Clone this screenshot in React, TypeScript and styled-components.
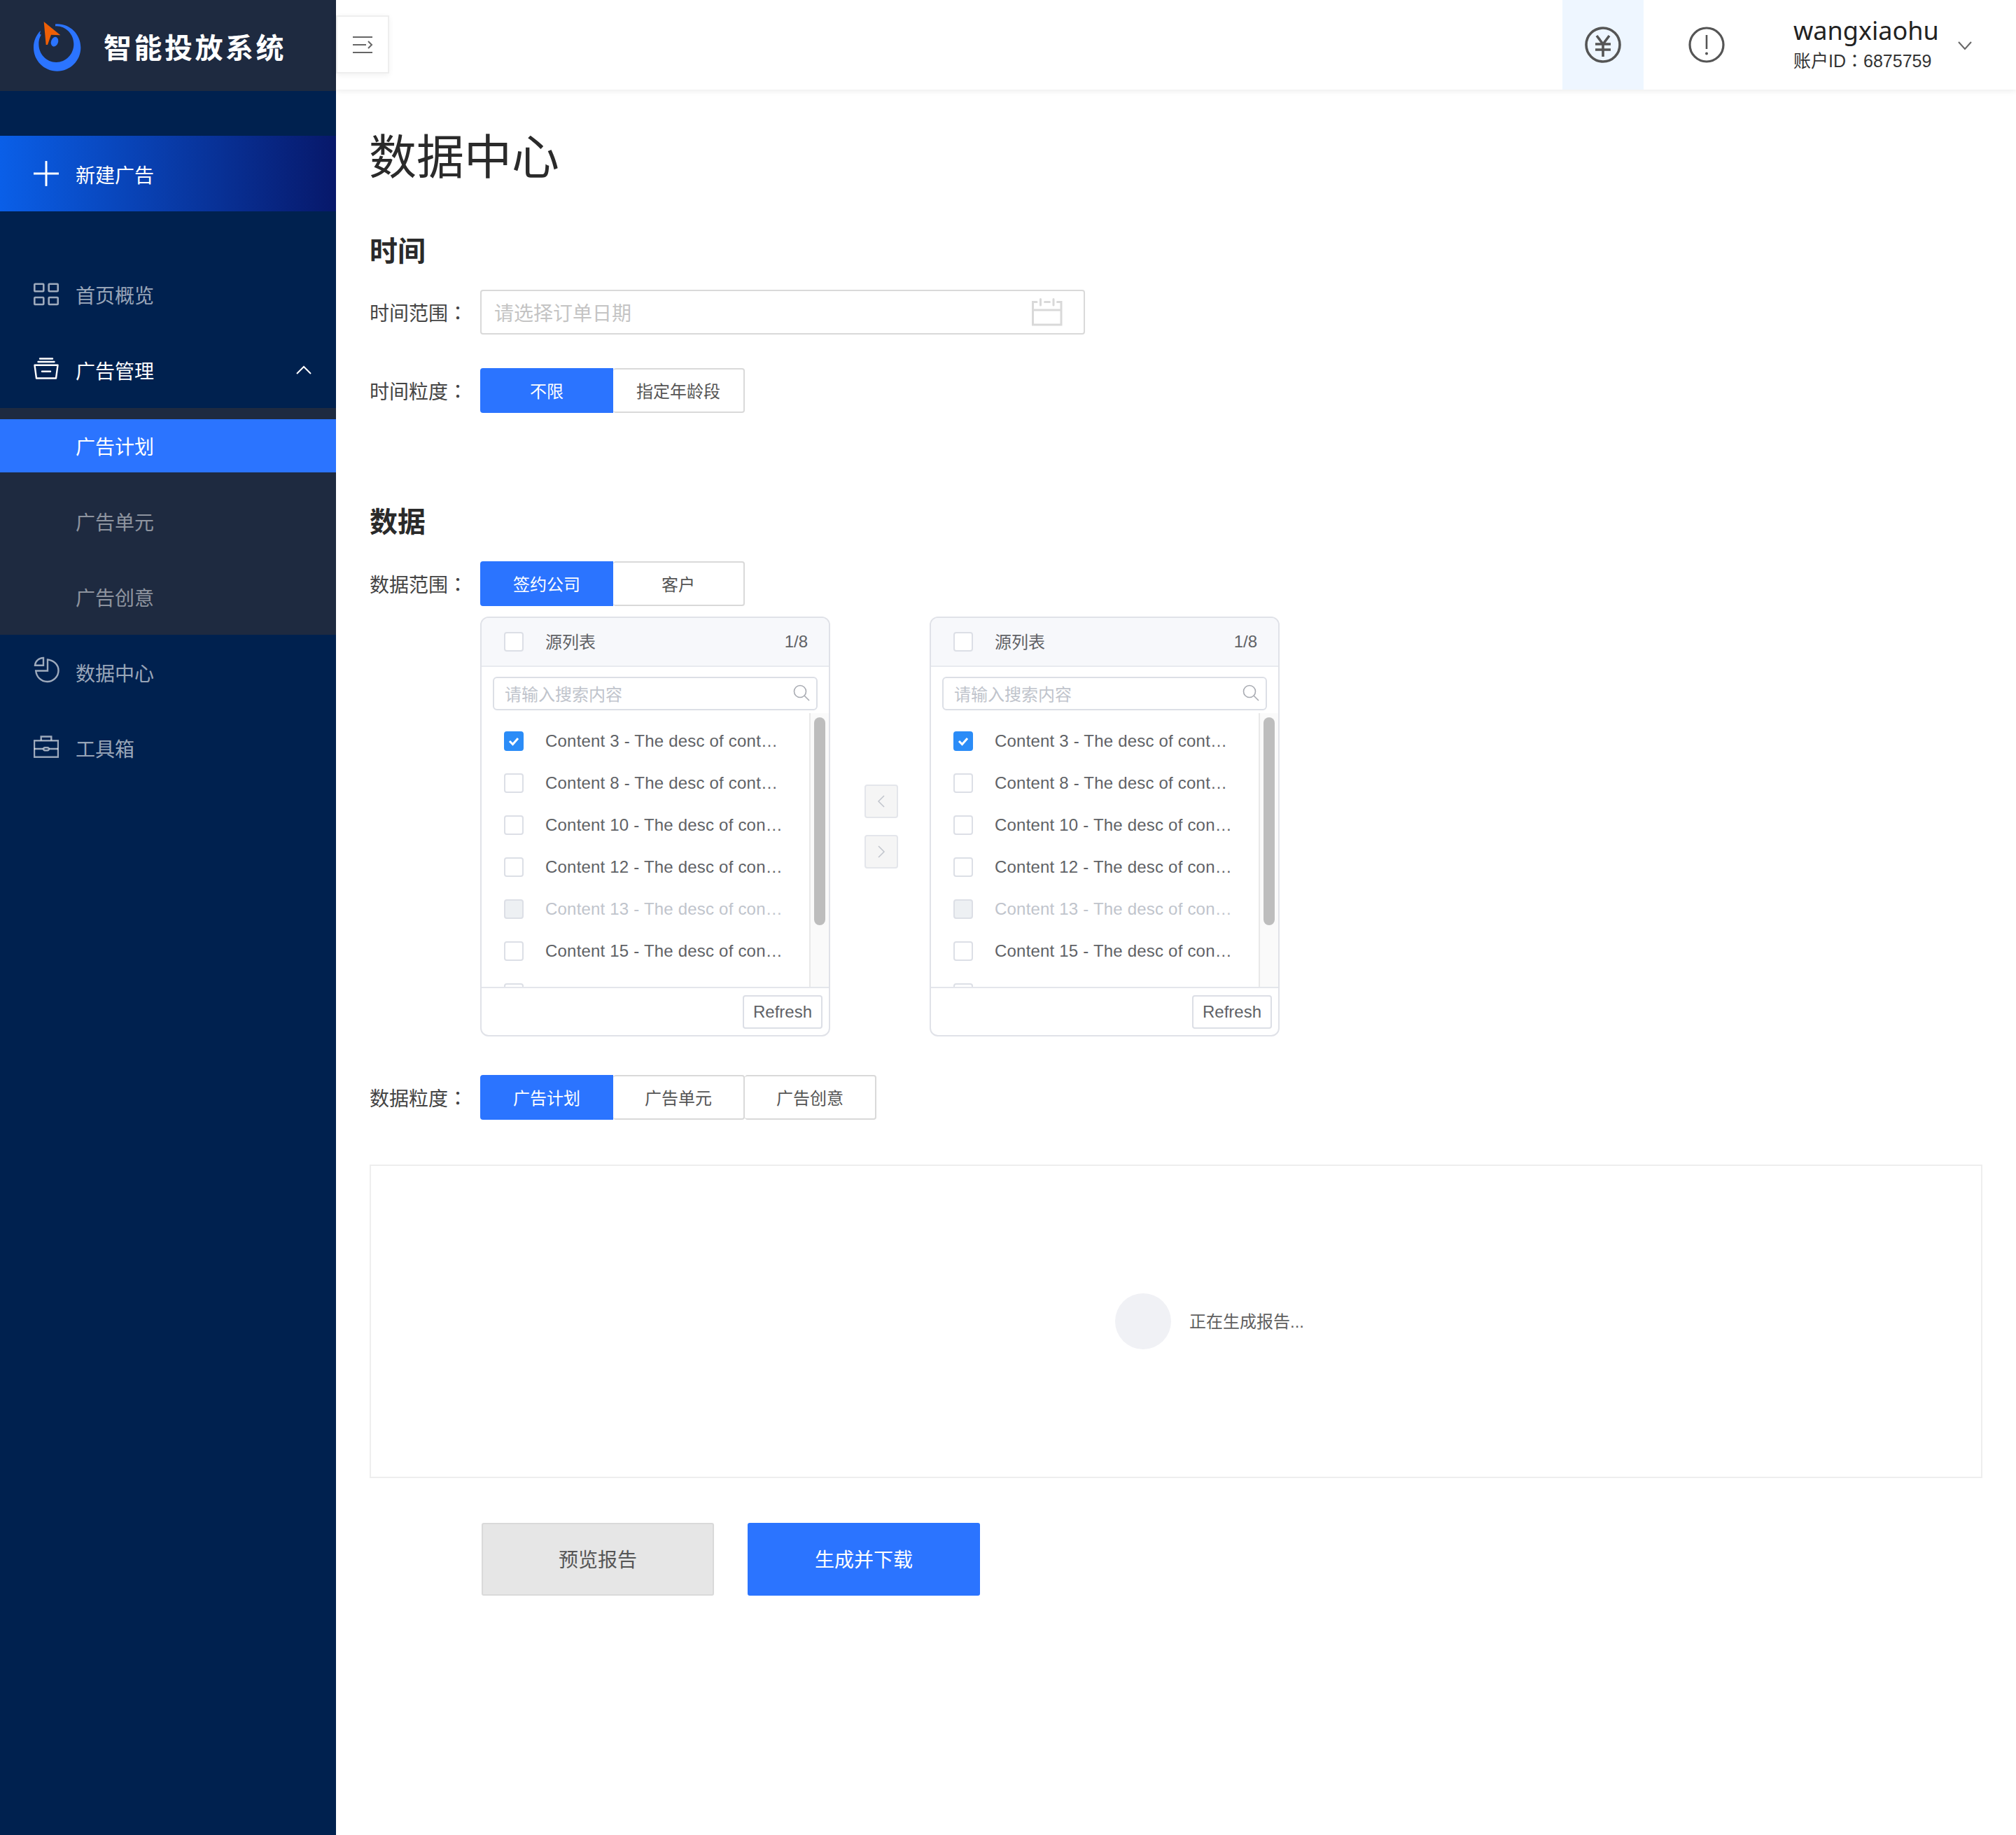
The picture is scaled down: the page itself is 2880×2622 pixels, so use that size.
import styled, { createGlobalStyle } from "styled-components";

const sans = `"Liberation Sans", "Noto Sans CJK SC", sans-serif`;

const GlobalStyle = createGlobalStyle`
  html, body {
    margin: 0;
    padding: 0;
    background: #fff;
  }
  * {
    box-sizing: border-box;
  }
  body {
    font-family: ${sans};
  }
`;

const rows = [
  { text: "Content 3 - The desc of content 3", checked: true },
  { text: "Content 8 - The desc of content 8" },
  { text: "Content 10 - The desc of content 10" },
  { text: "Content 12 - The desc of content 12" },
  { text: "Content 13 - The desc of content 13", disabled: true },
  { text: "Content 15 - The desc of content 15" },
  { text: "Content 16 - The desc of content 16" },
];

const Logo = () => (
  <svg width="70" height="72" viewBox="50 33 210 216">
    <path
      fill="#2b74ff"
      fillRule="evenodd"
      d="M154 46C210 46 255 90 255 147C255 203 210 248 154 248C98 248 53 203 53 147C53 90 98 46 154 46ZM150 55C108 55 75 90 75 132C75 175 108 210 150 210C192 210 225 175 225 132C225 90 192 55 150 55Z"
    />
    <path fill="#1e2a40" d="M88 40H146V56C122 60 108 74 100 96L80 90Z" />
    <ellipse cx="143" cy="122" rx="15" ry="21" fill="#2b74ff" transform="rotate(20 143 122)" />
    <path fill="#ee5f06" d="M97 36L168 94L128 92L113 135L106 135Z" />
  </svg>
);

const Plus = () => (
  <svg width="36" height="36" viewBox="0 0 36 36" stroke="#fff" strokeWidth="3" strokeLinecap="round">
    <path d="M0 18H36M18 1V35" />
  </svg>
);

const GridIcon = () => (
  <svg width="36" height="36" viewBox="0 0 36 36" fill="none" stroke="currentColor" strokeWidth="2.600">
    <rect x="1.300" y="2.800" width="13" height="10.500" rx="1" />
    <rect x="21.700" y="2.800" width="13" height="10.500" rx="1" />
    <rect x="1.300" y="22" width="13" height="10" rx="1" />
    <rect x="21.700" y="22" width="13" height="10" rx="1" />
  </svg>
);

const TrayIcon = () => (
  <svg width="36" height="36" viewBox="0 0 36 36" fill="none" stroke="currentColor" strokeWidth="2.400" strokeLinecap="round">
    <path d="M9 1.500H27M6.500 6H29.500" />
    <path d="M1.500 10.800H34.500L32 29.500H4Z" strokeLinejoin="round" />
    <path d="M12 19.700H24" />
  </svg>
);

const PieIcon = () => (
  <svg width="36" height="36" viewBox="0 4 36 36" overflow="visible" fill="none" stroke="currentColor" strokeWidth="2.400">
    <path d="M14 11.700H2C2.500 5.500 7.500 1.200 14 1V11.700Z" />
    <path d="M20 3.500C28.500 4.500 35.500 10.500 35.500 19C35.500 28 28 35 19.500 35C10.500 35 4 28 3.200 19.500H20Z" />
  </svg>
);

const CaseIcon = () => (
  <svg width="36" height="36" viewBox="0 0 36 36" fill="none" stroke="currentColor" strokeWidth="2.400">
    <rect x="1" y="7.300" width="34" height="23.400" />
    <path d="M10.700 7V1.500H25.300V7M1 19H14M22 19H35" />
    <rect x="14.500" y="17.300" width="7" height="4" rx="1.500" />
  </svg>
);

const Chevron = ({ up, size, color }: { up?: boolean; size: number; color: string }) => (
  <svg width={size} height={size} viewBox="0 0 24 24" fill="none" stroke={color} strokeWidth="2">
    <path d={up ? "M2 17L12 7L22 17" : "M3 8L12 18L21 8"} />
  </svg>
);

const Collapse = () => (
  <svg width="30" height="26" viewBox="0 0 30 26" fill="none" stroke="#666" strokeWidth="2">
    <path d="M1 2H29M1 13H20M1 24H29" />
    <path d="M23 8L28 13L23 18" />
  </svg>
);

const YenIcon = () => (
  <svg width="52" height="52" viewBox="0 0 52 52" fill="none" stroke="#555" strokeWidth="3.600">
    <circle cx="26" cy="26" r="24" />
    <path d="M17 13L26 25L35 13M15 25H37M15 33H37M26 25V43" />
  </svg>
);

const AlertIcon = () => (
  <svg width="52" height="52" viewBox="0 0 52 52" fill="none" stroke="#555" strokeWidth="3.200">
    <circle cx="26" cy="26" r="24" />
    <path d="M26 12V32" strokeWidth="2.600" />
    <circle cx="26" cy="38.500" r="2" fill="#555" stroke="none" />
  </svg>
);

const CalendarIcon = () => (
  <svg width="44" height="40" viewBox="0 0 44 40" fill="none" stroke="#d9d9d9" strokeWidth="3" strokeLinecap="round">
    <path d="M7 5.500H1.500V38H42V5.500H36.500M1.500 17H42M12.500 1.500V10M31 1.500V10M18.500 5.500H25.500" />
  </svg>
);

const SearchIcon = () => (
  <svg width="24" height="24" viewBox="0 0 24 24" fill="none" stroke="#a8abb2" strokeWidth="1.600">
    <circle cx="10" cy="10" r="8.500" />
    <path d="M16 16L23 23" />
  </svg>
);

const Arrow = ({ right }: { right?: boolean }) => (
  <svg width="12" height="20" viewBox="0 0 12 20" fill="none" stroke="#c0c4cc" strokeWidth="1.500">
    <path d={right ? "M2 2L10 10L2 18" : "M10 2L2 10L10 18"} />
  </svg>
);

const Transfer = () => (
  <Panel>
    <PanelHead>
      <Check />
      <HeadTitle>源列表</HeadTitle>
      <Count>1/8</Count>
    </PanelHead>
    <SearchBox>
      <span>请输入搜索内容</span>
      <SearchIcon />
    </SearchBox>
    <ListArea>
      <RowList>
        {rows.map((r) => (
          <Row key={r.text} $disabled={r.disabled}>
            <Check $checked={r.checked} $disabled={r.disabled}>
              {r.checked && (
                <svg width="16" height="14" viewBox="0 0 16 14" fill="none" stroke="#fff" strokeWidth="3">
                  <path d="M2 7L6.500 11.500L14 3" />
                </svg>
              )}
            </Check>
            <RowText>{r.text}</RowText>
          </Row>
        ))}
      </RowList>
      <Track>
        <Thumb />
      </Track>
    </ListArea>
    <PanelFoot>
      <Refresh>Refresh</Refresh>
    </PanelFoot>
  </Panel>
);

export default function App() {
  return (
    <>
      <GlobalStyle />
      <Page>
        <Sidebar>
          <Brand>
            <Logo />
            <BrandName>智能投放系统</BrandName>
          </Brand>
          <NewAd>
            <Plus />
            <NewAdText>新建广告</NewAdText>
          </NewAd>
          <Nav>
            <NavItem>
              <GridIcon />
              首页概览
            </NavItem>
            <NavItem $open>
              <TrayIcon />
              广告管理
              <Caret>
                <Chevron up size={24} color="#fff" />
              </Caret>
            </NavItem>
            <SubMenu>
              <SubItem $active>广告计划</SubItem>
              <SubItem>广告单元</SubItem>
              <SubItem>广告创意</SubItem>
            </SubMenu>
            <NavItem>
              <PieIcon />
              数据中心
            </NavItem>
            <NavItem>
              <CaseIcon />
              工具箱
            </NavItem>
          </Nav>
        </Sidebar>
        <Main>
          <TopBar>
            <Toggle>
              <Collapse />
            </Toggle>
            <TopRight>
              <TopIcon $active>
                <YenIcon />
              </TopIcon>
              <TopIcon>
                <AlertIcon />
              </TopIcon>
              <User>
                <UserName>wangxiaohu</UserName>
                <UserId>
                  账户ID<Colon>：</Colon>6875759
                </UserId>
              </User>
              <Chevron size={24} color="#666" />
            </TopRight>
          </TopBar>
          <Content>
            <PageTitle>数据中心</PageTitle>
            <Heading>时间</Heading>
            <FormRow>
              <Label>
                时间范围<Colon>：</Colon>
              </Label>
              <DateInput>
                请选择订单日期
                <CalendarIcon />
              </DateInput>
            </FormRow>
            <FormRow $top={48}>
              <Label>
                时间粒度<Colon>：</Colon>
              </Label>
              <Segments>
                <Segment $active>不限</Segment>
                <Segment>指定年龄段</Segment>
              </Segments>
            </FormRow>
            <Heading $top={128}>数据</Heading>
            <FormRow $top={28}>
              <Label>
                数据范围<Colon>：</Colon>
              </Label>
              <Segments>
                <Segment $active>签约公司</Segment>
                <Segment>客户</Segment>
              </Segments>
            </FormRow>
            <TransferWrap>
              <Transfer />
              <Moves>
                <MoveBtn>
                  <Arrow />
                </MoveBtn>
                <MoveBtn>
                  <Arrow right />
                </MoveBtn>
              </Moves>
              <Transfer />
            </TransferWrap>
            <FormRow $top={55}>
              <Label>
                数据粒度<Colon>：</Colon>
              </Label>
              <Segments>
                <Segment $active>广告计划</Segment>
                <Segment>广告单元</Segment>
                <Segment>广告创意</Segment>
              </Segments>
            </FormRow>
            <ReportBox>
              <Spinner />
              <ReportText>正在生成报告...</ReportText>
            </ReportBox>
            <Actions>
              <ActionBtn>预览报告</ActionBtn>
              <ActionBtn $primary>生成并下载</ActionBtn>
            </Actions>
          </Content>
        </Main>
      </Page>
    </>
  );
}

const Page = styled.div`
  display: flex;
  width: 2880px;
  min-height: 2622px;
`;

const Sidebar = styled.aside`
  width: 480px;
  flex-shrink: 0;
  background: #00214f;
`;

const Brand = styled.div`
  height: 130px;
  padding: 2px 0 0 47px;
  display: flex;
  align-items: center;
  gap: 31px;
  background: #1e2a40;
`;

const BrandName = styled.div`
  font-size: 40px;
  font-weight: 700;
  letter-spacing: 3.500px;
  color: #fff;
`;

const NewAd = styled.div`
  height: 108px;
  margin-top: 64px;
  padding-left: 48px;
  display: flex;
  align-items: center;
  gap: 24px;
  font-size: 28px;
  color: #fff;
  background: linear-gradient(90deg, #0a5fe8 0%, #07186a 100%);
`;

const NewAdText = styled.span`
  padding-top: 2px;
`;

const Nav = styled.nav`
  margin-top: 65px;
`;

const NavItem = styled.div<{ $open?: boolean }>`
  height: 108px;
  padding: 0 34px 0 48px;
  display: flex;
  align-items: center;
  gap: 24px;
  font-size: 28px;
  color: ${(p) => (p.$open ? "#fff" : "rgba(255, 255, 255, 0.62)")};
`;

const Caret = styled.span`
  margin-left: auto;
  display: flex;
`;

const SubMenu = styled.div`
  display: flex;
  flex-direction: column;
  gap: 32px;
  padding: 16px 0;
  background: #1e2a40;
`;

const SubItem = styled.div<{ $active?: boolean }>`
  height: 76px;
  padding-left: 108px;
  display: flex;
  align-items: center;
  font-size: 28px;
  color: ${(p) => (p.$active ? "#fff" : "rgba(255, 255, 255, 0.5)")};
  background: ${(p) => (p.$active ? "#2b74ff" : "transparent")};
`;

const Main = styled.main`
  flex: 1;
  min-width: 0;
`;

const TopBar = styled.header`
  height: 128px;
  display: flex;
  justify-content: space-between;
  background: #fff;
  box-shadow: 0 2px 8px rgba(0, 0, 0, 0.08);
`;

const Toggle = styled.div`
  width: 76px;
  height: 83px;
  margin-top: 22px;
  display: flex;
  align-items: center;
  justify-content: center;
  border: 2px solid #eee;
  background: #fff;
  box-shadow: 0 2px 8px rgba(0, 0, 0, 0.06);
`;

const TopRight = styled.div`
  display: flex;
  align-items: center;
  padding-right: 61px;
`;

const TopIcon = styled.div<{ $active?: boolean }>`
  width: 116px;
  height: 128px;
  margin-right: 32px;
  display: flex;
  align-items: center;
  justify-content: center;
  background: ${(p) => (p.$active ? "#eef6ff" : "transparent")};
`;

const User = styled.div`
  width: 233px;
  margin-left: 34px;
  padding-bottom: 2px;
`;

const UserName = styled.div`
  font-family: "Noto Sans", "Noto Sans CJK SC", sans-serif;
  font-size: 36px;
  line-height: 46px;
  color: #222;
`;

const UserId = styled.div`
  font-size: 25px;
  line-height: 36px;
  color: #333;
`;

const Colon = styled.span`
  font-family: "Noto Sans CJK TC", sans-serif;
`;

const Content = styled.div`
  padding: 49px 48px 0;
`;

const PageTitle = styled.h1`
  margin: 0 0 0 -1px;
  font-size: 68px;
  font-weight: 400;
  line-height: 96px;
  color: #2a2a2a;
`;

const Heading = styled.h2<{ $top?: number }>`
  margin: ${(p) => p.$top ?? 58}px 0 0;
  font-size: 40px;
  font-weight: 700;
  line-height: 56px;
  color: #2a2a2a;
`;

const FormRow = styled.div<{ $top?: number }>`
  display: flex;
  align-items: center;
  margin-top: ${(p) => p.$top ?? 27}px;
`;

const Label = styled.div`
  width: 158px;
  flex-shrink: 0;
  font-size: 28px;
  color: #444;
`;

const DateInput = styled.div`
  width: 864px;
  height: 64px;
  padding: 0 30px 0 18px;
  display: flex;
  align-items: center;
  justify-content: space-between;
  font-size: 28px;
  color: #c4c4c4;
  border: 2px solid #d9d9d9;
  border-radius: 4px;
`;

const Segments = styled.div`
  display: flex;
`;

const Segment = styled.div<{ $active?: boolean }>`
  width: 188px;
  height: 64px;
  padding-bottom: 2px;
  display: flex;
  align-items: center;
  justify-content: center;
  font-size: 24px;
  color: ${(p) => (p.$active ? "#fff" : "#555")};
  background: ${(p) => (p.$active ? "#2b74ff" : "#fff")};
  border: 2px solid ${(p) => (p.$active ? "#2b74ff" : "#d9d9d9")};
  border-left-width: ${(p) => (p.$active ? 2 : 0)}px;
  border-radius: 4px;

  &:first-child {
    width: 190px;
    border-top-right-radius: 0;
    border-bottom-right-radius: 0;
  }
`;

const TransferWrap = styled.div`
  display: flex;
  align-items: center;
  margin: 15px 0 0 158px;
`;

const Panel = styled.div`
  width: 500px;
  height: 600px;
  display: flex;
  flex-direction: column;
  border: 2px solid #e0e2e8;
  border-radius: 12px;
  overflow: hidden;
`;

const PanelHead = styled.div`
  height: 70px;
  flex-shrink: 0;
  padding: 0 30px 0 32px;
  display: flex;
  align-items: center;
  gap: 31px;
  background: #f7f8fb;
  border-bottom: 2px solid #e8eaef;
`;

const HeadTitle = styled.div`
  padding-bottom: 4px;
  font-size: 24px;
  color: #606266;
`;

const Count = styled.div`
  margin-left: auto;
  font-size: 24px;
  color: #606266;
`;

const Check = styled.span<{ $checked?: boolean; $disabled?: boolean }>`
  width: 28px;
  height: 28px;
  flex-shrink: 0;
  display: flex;
  align-items: center;
  justify-content: center;
  border: 2px solid ${(p) => (p.$checked ? "#2b8cf7" : "#dcdfe6")};
  border-radius: 4px;
  background: ${(p) => (p.$checked ? "#2b8cf7" : p.$disabled ? "#edf0f3" : "#fff")};
`;

const SearchBox = styled.div`
  height: 48px;
  flex-shrink: 0;
  margin: 14px 16px 4px;
  padding: 0 9px 2px 15px;
  display: flex;
  align-items: center;
  justify-content: space-between;
  font-size: 24px;
  color: #c0c4cc;
  border: 2px solid #dcdfe6;
  border-radius: 6px;
`;

const ListArea = styled.div`
  flex: 1;
  min-height: 0;
  display: flex;
  overflow: hidden;
`;

const RowList = styled.div`
  flex: 1;
  min-width: 0;
  padding-top: 10px;
`;

const Row = styled.div<{ $disabled?: boolean }>`
  height: 60px;
  padding: 0 37px 0 32px;
  display: flex;
  align-items: center;
  gap: 31px;
  font-size: 24px;
  letter-spacing: 0.200px;
  color: ${(p) => (p.$disabled ? "#c0c4cc" : "#606266")};
`;

const RowText = styled.span`
  overflow: hidden;
  white-space: nowrap;
  text-overflow: ellipsis;
`;

const Track = styled.div`
  width: 28px;
  flex-shrink: 0;
  padding: 6px 5px 0 5px;
  background: #fafafa;
  border-left: 2px solid #e8e8e8;
`;

const Thumb = styled.div`
  width: 16px;
  height: 297px;
  border-radius: 8px;
  background: #bdbdbd;
`;

const PanelFoot = styled.div`
  height: 69px;
  flex-shrink: 0;
  padding: 10px 9px 0 0;
  display: flex;
  justify-content: flex-end;
  border-top: 2px solid #e4e6eb;
`;

const Refresh = styled.div`
  width: 114px;
  height: 48px;
  display: flex;
  align-items: center;
  justify-content: center;
  font-size: 24px;
  color: #606266;
  border: 2px solid #dcdfe6;
  border-radius: 4px;
`;

const Moves = styled.div`
  width: 142px;
  padding-left: 4px;
  display: flex;
  flex-direction: column;
  align-items: center;
  gap: 24px;
`;

const MoveBtn = styled.div`
  width: 48px;
  height: 48px;
  display: flex;
  align-items: center;
  justify-content: center;
  background: #f5f5f5;
  border: 2px solid #e4e6eb;
  border-radius: 4px;
`;

const ReportBox = styled.div`
  height: 448px;
  margin-top: 64px;
  padding-left: 96px;
  display: flex;
  align-items: center;
  justify-content: center;
  gap: 26px;
  border: 2px solid #eee;
`;

const Spinner = styled.div`
  width: 80px;
  height: 80px;
  border-radius: 50%;
  background: #f0f1f5;
`;

const ReportText = styled.div`
  padding-bottom: 4px;
  font-size: 24px;
  color: #606060;
`;

const Actions = styled.div`
  display: flex;
  gap: 48px;
  margin: 64px 0 0 160px;
`;

const ActionBtn = styled.div<{ $primary?: boolean }>`
  width: 332px;
  height: 104px;
  padding-bottom: 2px;
  display: flex;
  align-items: center;
  justify-content: center;
  font-size: 28px;
  color: ${(p) => (p.$primary ? "#fff" : "#555")};
  background: ${(p) => (p.$primary ? "#2b74ff" : "#e6e6e6")};
  border: 2px solid ${(p) => (p.$primary ? "#2b74ff" : "#d9d9d9")};
  border-radius: 3px;
`;
